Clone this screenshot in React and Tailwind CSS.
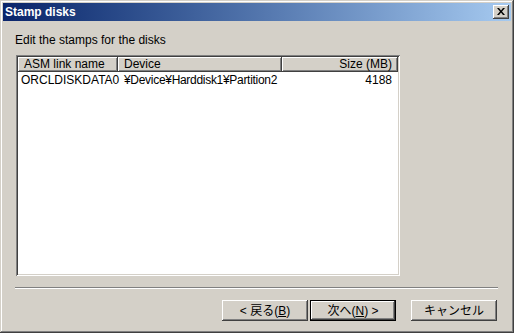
import React from "react";

const raised =
  "shadow-[inset_-1px_-1px_#404040,inset_1px_1px_#ffffff,inset_-2px_-2px_#808080]";

function Btn({ children, def }) {
  return (
    <div
      className={
        "h-[21px] flex items-center justify-center bg-[#d4d0c8] " +
        (def
          ? "w-[86px] shadow-[inset_0_0_0_1px_#000000,inset_-2px_-2px_#404040,inset_2px_2px_#ffffff,inset_-3px_-3px_#808080]"
          : "w-[86px] shadow-[inset_-1px_-1px_#404040,inset_1px_1px_#ffffff,inset_-2px_-2px_#808080]")
      }
    >
      {children}
    </div>
  );
}

export default function App() {
  return (
    <div
      className="w-[514px] h-[333px] bg-[#d4d0c8] p-[3px] flex flex-col text-[12px] text-black shadow-[inset_-1px_-1px_#404040,inset_1px_1px_#d4d0c8,inset_-2px_-2px_#808080,inset_2px_2px_#ffffff]"
      style={{ fontFamily: '"Liberation Sans", "Noto Sans CJK JP", sans-serif' }}
    >
      {/* Title bar */}
      <div className="h-[18px] flex items-center justify-between bg-gradient-to-r from-[#0a246a] to-[#a6caf0] pl-[2px] pr-[2px]">
        <span className="text-white font-bold text-[12px] leading-none">Stamp disks</span>
        <div className={"w-[16px] h-[14px] bg-[#d4d0c8] flex items-center justify-center " + raised}>
          <svg width="8" height="7" viewBox="0 0 8 7" className="-mt-[1px]">
            <path d="M0 0h2l2 2.5L6 0h2L5 3.5 8 7H6L4 4.5 2 7H0l3-3.5z" fill="#000" />
          </svg>
        </div>
      </div>

      {/* Body */}
      <div className="flex flex-col pl-[12px] pr-[14px]">
        <div className="mt-[12px] h-[14px] leading-[14px]">Edit the stamps for the disks</div>

        <div className="mt-[8px] ml-[1px] w-[384px] h-[221px] bg-white p-[2px] shadow-[inset_1px_1px_#808080,inset_-1px_-1px_#ffffff,inset_2px_2px_#404040,inset_-2px_-2px_#d4d0c8]">
          <div className="flex h-[15px] leading-[15px]">
            <div className={"w-[100px] bg-[#d4d0c8] pl-[6px] " + raised}>ASM link name</div>
            <div className={"w-[164px] bg-[#d4d0c8] pl-[6px] " + raised}>Device</div>
            <div className={"w-[116px] bg-[#d4d0c8] pr-[6px] text-right " + raised}>Size (MB)</div>
          </div>
          <div className="flex h-[14px] leading-[14px] mt-[1px]">
            <div className="w-[100px] pl-[3px] whitespace-nowrap">ORCLDISKDATA0</div>
            <div className="w-[164px] pl-[6px] whitespace-nowrap tracking-[-0.3px]">¥Device¥Harddisk1¥Partition2</div>
            <div className="w-[116px] pr-[6px] text-right">4188</div>
          </div>
        </div>

        <div className="mt-[11px] h-[2px] border-t border-[#808080] border-b border-b-white w-[483px]" />

        <div className="mt-[11px] flex justify-end">
          <div className="flex">
            <Btn>
              <span>&lt; 戻る(<u>B</u>)</span>
            </Btn>
            <div className="w-[2px]" />
            <Btn def>
              <span>次へ(<u>N</u>) &gt;</span>
            </Btn>
            <div className="w-[15px]" />
            <Btn>
              <span>キャンセル</span>
            </Btn>
          </div>
        </div>
      </div>
    </div>
  );
}
